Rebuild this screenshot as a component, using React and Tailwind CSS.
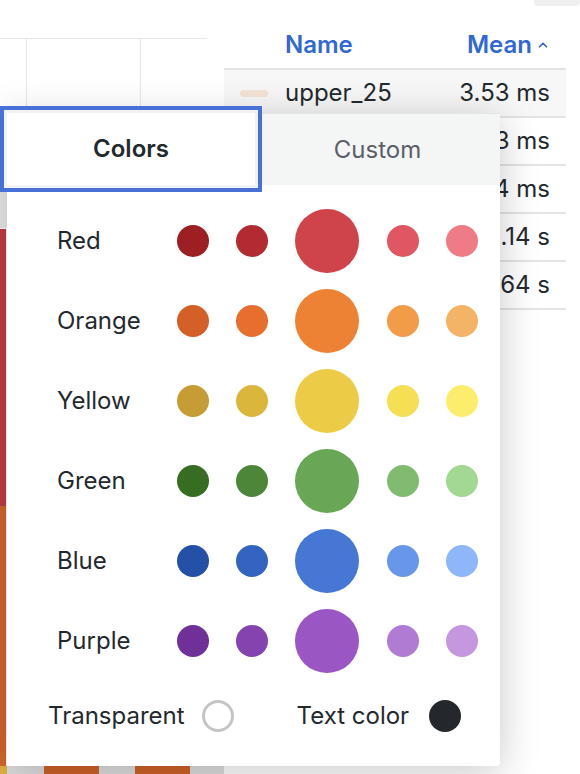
import React from "react";
import { ChevronUp } from "lucide-react";

const palette = [
  { name: "Red", shades: ["#9d1f23", "#b22b32", "#cf434b", "#e05662", "#ef7b87"] },
  { name: "Orange", shades: ["#d45f27", "#e86e2d", "#ee8234", "#f29c4a", "#f4b468"] },
  { name: "Yellow", shades: ["#c69d34", "#dab73c", "#eccc46", "#f5df55", "#fced6c"] },
  { name: "Green", shades: ["#376d22", "#4d8638", "#69a655", "#81bb72", "#a2d893"] },
  { name: "Blue", shades: ["#2450a7", "#3364c2", "#4677d4", "#6897ea", "#8fb6f8"] },
  { name: "Purple", shades: ["#6f3198", "#8443ae", "#9a57c3", "#b07bd3", "#c497df"] },
];

const rows = [
  { name: "upper_25", value: "3.53 ms", swatch: "#f5e3d5", active: true },
  { name: "upper_50", value: "4.13 ms" },
  { name: "upper_75", value: "6.54 ms" },
  { name: "upper_90", value: "1.14 s" },
  { name: "upper_99", value: "2.64 s" },
];

const Chart = () => (
  <svg width="224" height="774" className="shrink-0 block">
    <line x1="0" y1="38.5" x2="207" y2="38.5" stroke="#e6e6e6" />
    <line x1="26.5" y1="38" x2="26.5" y2="774" stroke="#e6e6e6" />
    <line x1="140.5" y1="38" x2="140.5" y2="774" stroke="#e6e6e6" />
    <rect x="0" y="192" width="7" height="36" fill="#ebebeb" />
    <rect x="0" y="229" width="6" height="277" fill="#c23b48" />
    <rect x="0" y="506" width="6" height="260" fill="#d8652c" />
    <rect x="0" y="766" width="224" height="8" fill="#dedede" />
    <rect x="0" y="766" width="7" height="8" fill="#e2b245" />
    <rect x="44" y="766" width="55" height="8" fill="#cf6329" />
    <rect x="135" y="766" width="55" height="8" fill="#cf6329" />
  </svg>
);

const Table = () => (
  <div className="w-[342px] pt-[21px] text-[24px] text-[#24292e]">
    <div className="flex items-center h-[47px] pl-[61px] pr-[16px] font-semibold text-[#3267d6]">
      <span className="flex-1">Name</span>
      <span className="flex items-center gap-[4px]">
        Mean
        <ChevronUp size={14} strokeWidth={3} />
      </span>
    </div>
    {rows.map((r) => (
      <div
        key={r.name}
        className={`flex items-center h-[48px] border-t-2 border-[#e4e4e4] pl-[16px] pr-[16px] ${
          r.active ? "bg-[#f7f7f7]" : ""
        }`}
      >
        <span
          className="w-[28px] h-[7px] rounded-full mr-[17px]"
          style={{ backgroundColor: r.swatch || "transparent" }}
        />
        <span className="flex-1">{r.name}</span>
        <span>{r.value}</span>
      </div>
    ))}
    <div className="border-t-2 border-[#e4e4e4]" />
  </div>
);

const ColorPicker = () => (
  <div className="absolute left-[7px] top-[113px] w-[493px] h-[653px] bg-white rounded-b-[4px] shadow-[0_6px_40px_rgba(0,0,0,0.22)] text-[#24292e]">
    <div className="flex h-[72px] text-[24px]">
      <button className="relative z-10 w-[248px] bg-white font-semibold shadow-[0_0_0_3px_#f1f3f3,0_0_0_7px_#4771d6]">
        Colors
      </button>
      <button className="flex-1 bg-[#f4f5f5] border-t border-[#e4e5e5] text-[#5b5f67]">
        Custom
      </button>
    </div>

    <div className="flex flex-col gap-[16px] pt-[24px] pl-[50px]">
      {palette.map((p) => (
        <div key={p.name} className="flex items-center h-[64px]">
          <span className="w-[120px] text-[24px]">{p.name}</span>
          <div className="flex items-center gap-[27px]">
            {p.shades.map((c, i) => (
              <span
                key={c}
                className={`rounded-full ${i === 2 ? "w-[64px] h-[64px] mr-[1px]" : "w-[32px] h-[32px]"}`}
                style={{ backgroundColor: c }}
              />
            ))}
          </div>
        </div>
      ))}
    </div>

    <div className="flex items-center h-[32px] mt-[27px] pl-[41px] text-[24px]">
      <span>Transparent</span>
      <span className="ml-[17px] w-[32px] h-[32px] rounded-full border-[3px] border-[#c5c5c5]" />
      <span className="ml-[63px]">Text color</span>
      <span className="ml-[20px] w-[32px] h-[32px] rounded-full bg-[#24272b]" />
    </div>
  </div>
);

export default function App() {
  return (
    <div className="relative w-[580px] h-[774px] overflow-hidden bg-white font-['Inter',sans-serif]">
      <div className="flex h-full">
        <Chart />
        <Table />
      </div>
      <div className="absolute right-0 top-[-6px] w-[46px] h-[12px] rounded-[4px] bg-[#efefef]" />
      <ColorPicker />
    </div>
  );
}
